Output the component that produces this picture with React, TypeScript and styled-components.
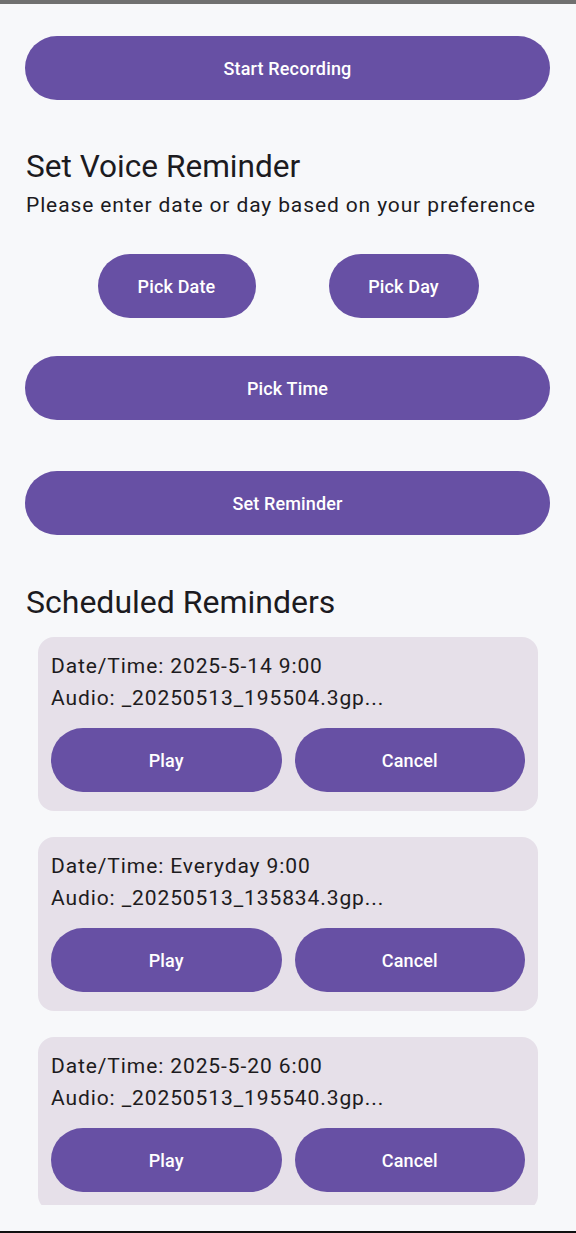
import React from "react";
import styled, { createGlobalStyle } from "styled-components";

const Global = createGlobalStyle`
  html, body { margin: 0; padding: 0; background: #f7f8fa; }
  body { font-family: Roboto, "Noto Sans", sans-serif; color: #1d1b20; }
  * { box-sizing: border-box; }
`;

const Screen = styled.div`
  width: 576px;
  height: 1233px;
  display: flex;
  flex-direction: column;
  background: #f7f8fa;
  overflow: hidden;
`;

const StatusEdge = styled.div`
  height: 4px;
  background: #707070;
  flex: none;
`;

const Scroll = styled.div`
  height: 1201px;
  overflow: hidden;
  flex: none;
  padding: 32px 26px 0 25px;
  display: flex;
  flex-direction: column;
`;

const NavSpace = styled.div`
  flex: 1;
  display: flex;
  flex-direction: column;
  justify-content: flex-end;
`;

const NavBar = styled.div`
  height: 2px;
  background: #111;
`;

const PillButton = styled.button<{ $w?: number }>`
  height: 64px;
  border: none;
  border-radius: 32px;
  background: #6750a4;
  color: #fff;
  font-family: Roboto, "Noto Sans", sans-serif;
  font-size: 18px;
  font-weight: 500;
  letter-spacing: 0.15px;
  padding: 0 39px;
  flex: ${(p) => (p.$w ? "none" : "1")};
  width: ${(p) => (p.$w ? `${p.$w}px` : "auto")};
  cursor: pointer;
`;

const FullButton = styled(PillButton)<{ $top: number }>`
  width: 100%;
  flex: none;
  margin-top: ${(p) => p.$top}px;
`;

const Heading = styled.h2<{ $top: number; $size: number }>`
  margin: ${(p) => p.$top}px 0 0 1px;
  font-size: ${(p) => p.$size}px;
  line-height: 36px;
  font-weight: 400;
  color: #1c1b1f;
`;

const Subtitle = styled.p`
  margin: 6px 0 0 1px;
  font-size: 21px;
  line-height: 28px;
  letter-spacing: 0.88px;
  color: #1c1b1f;
`;

const PickRow = styled.div`
  display: flex;
  justify-content: center;
  gap: 73px;
  margin-top: 35px;
  padding-left: 1px;
`;

const CardList = styled.div`
  display: flex;
  flex-direction: column;
  gap: 26px;
  margin: 17px 12px 0 13px;
`;

const Card = styled.div`
  background: #e6e0e9;
  border-radius: 16px;
  padding: 13px 13px 19px 13px;
  display: flex;
  flex-direction: column;
`;

const CardLine = styled.div`
  font-size: 21px;
  line-height: 32px;
  letter-spacing: 0.9px;
  color: #1d1b20;
`;

const CardActions = styled.div`
  display: flex;
  gap: 13px;
  margin-top: 14px;
`;

const reminders = [
  { when: "2025-5-14 9:00", audio: "_20250513_195504.3gp..." },
  { when: "Everyday 9:00", audio: "_20250513_135834.3gp..." },
  { when: "2025-5-20 6:00", audio: "_20250513_195540.3gp..." },
];

export default function App() {
  return (
    <>
      <Global />
      <Screen>
        <StatusEdge />
        <Scroll>
          <FullButton $top={0}>Start Recording</FullButton>
          <Heading $top={49} $size={31.6}>Set Voice Reminder</Heading>
          <Subtitle>Please enter date or day based on your preference</Subtitle>
          <PickRow>
            <PillButton $w={158}>Pick Date</PillButton>
            <PillButton $w={150}>Pick Day</PillButton>
          </PickRow>
          <FullButton $top={38}>Pick Time</FullButton>
          <FullButton $top={51}>Set Reminder</FullButton>
          <Heading $top={49} $size={32}>Scheduled Reminders</Heading>
          <CardList>
            {reminders.map((r, i) => (
              <Card key={i}>
                <CardLine>Date/Time: {r.when}</CardLine>
                <CardLine>Audio: {r.audio}</CardLine>
                <CardActions>
                  <PillButton>Play</PillButton>
                  <PillButton>Cancel</PillButton>
                </CardActions>
              </Card>
            ))}
          </CardList>
        </Scroll>
        <NavSpace>
          <NavBar />
        </NavSpace>
      </Screen>
    </>
  );
}
